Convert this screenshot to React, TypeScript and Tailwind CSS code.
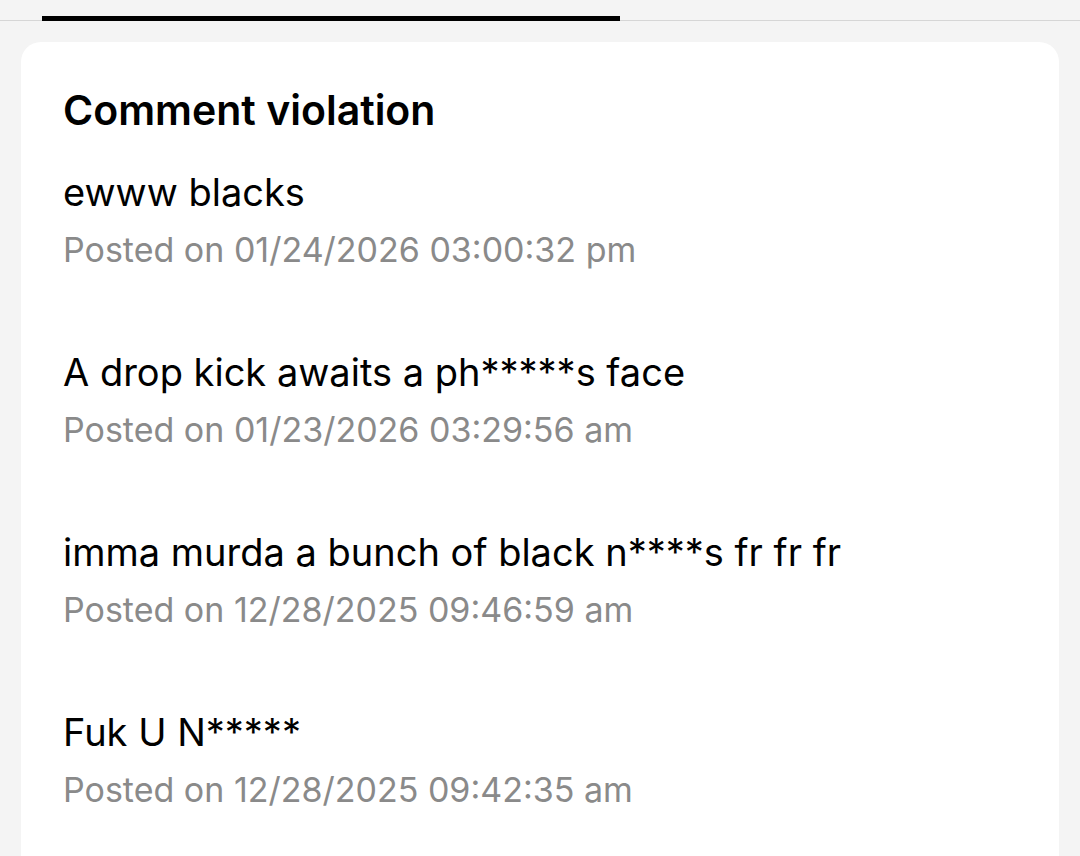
type IViolation = {
  text: string;
  postedOn: string;
};

const violations: IViolation[] = [
  { text: "ewww blacks", postedOn: "01/24/2026 03:00:32 pm" },
  { text: "A drop kick awaits a ph*****s face", postedOn: "01/23/2026 03:29:56 am" },
  { text: "imma murda a bunch of black n****s fr fr fr", postedOn: "12/28/2025 09:46:59 am" },
  { text: "Fuk U N*****", postedOn: "12/28/2025 09:42:35 am" },
];

const App = () => {
  return (
    <div className="min-h-[856px] w-full bg-[#f4f4f4] font-['Inter','Noto_Sans',sans-serif] overflow-hidden">
      {/* tabs */}
      <div className="h-[21px] border-b border-[#d6d6d6] flex items-end">
        <div className="ml-[42px] w-[578px] h-[5px] bg-black mb-[-1px]" />
      </div>

      <div className="mx-[21px] mt-[21px] bg-white rounded-[20px] pl-[42px] pr-[43px] pt-[46px] pb-[60px] min-h-[900px]">
        <h2 className="text-[41px] leading-[44px] font-semibold text-black">
          Comment violation
        </h2>
        <div className="flex flex-col gap-[78px] mt-[38px]">
          {violations.map((violation) => (
            <div key={violation.postedOn} className="flex flex-col gap-[14px]">
              <span className="text-[38px] leading-[44px] text-black">
                {violation.text}
              </span>
              <span className="text-[34px] leading-[44px] text-[#8a8a8a]">
                Posted on {violation.postedOn}
              </span>
            </div>
          ))}
        </div>
      </div>
    </div>
  );
};

export default App;
